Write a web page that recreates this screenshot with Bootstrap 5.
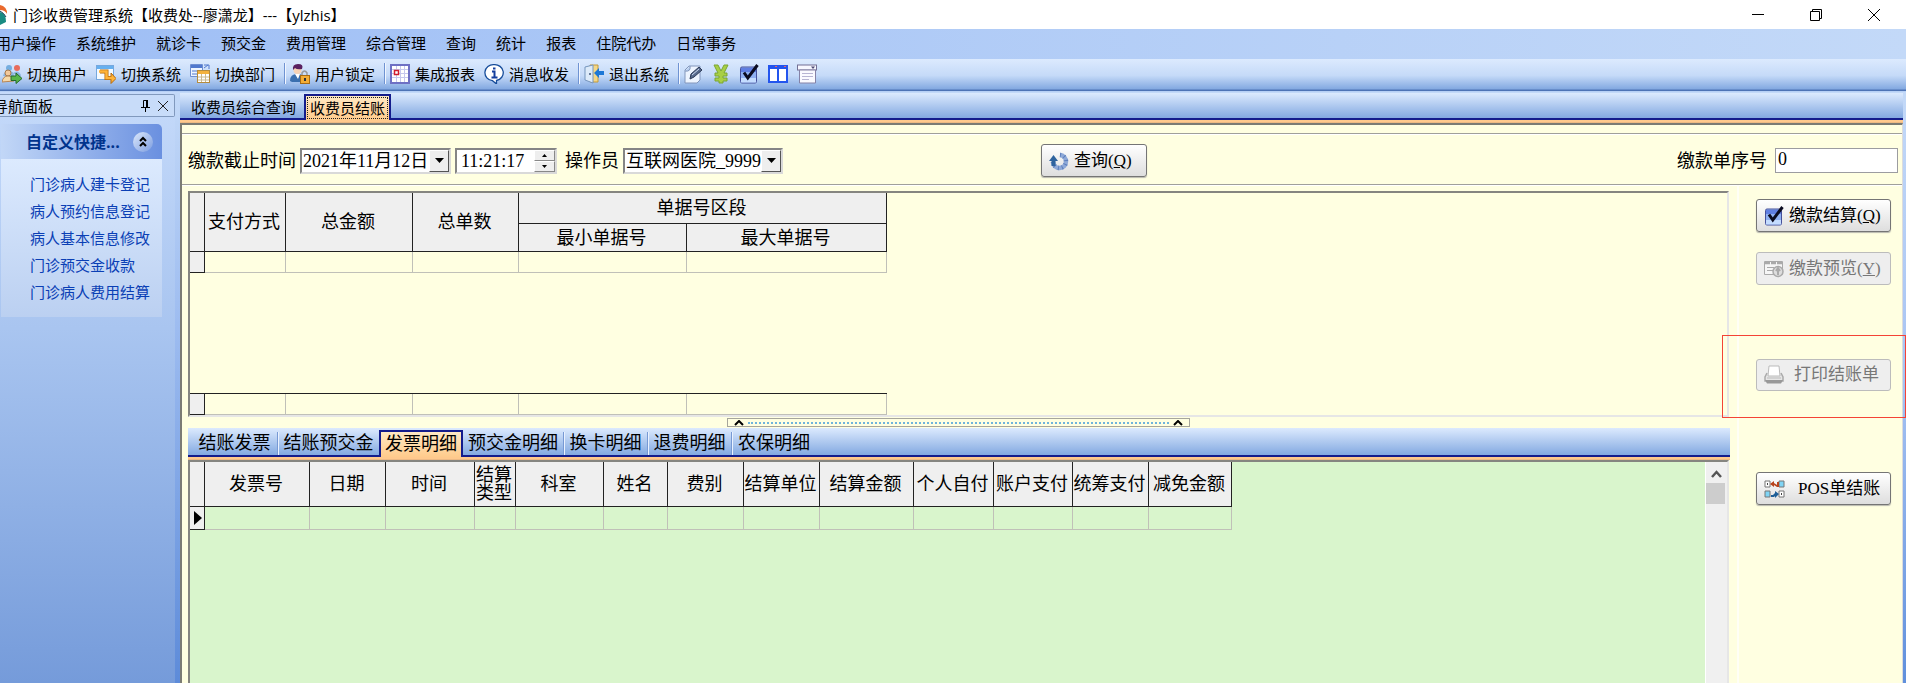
<!DOCTYPE html>
<html lang="zh-CN">
<head>
<meta charset="utf-8">
<meta name="viewport" content="width=device-width, initial-scale=1">
<title>门诊收费管理系统</title>
<link href="https://cdn.jsdelivr.net/npm/bootstrap@5.3.0/dist/css/bootstrap.min.css" rel="stylesheet">
<style>
  body { font: 15px/20px "Open Sans", "Noto Sans CJK SC", sans-serif; color: #000; background: #c3d9f8; }
  svg { display: block; flex: none; }
  a { color: inherit; text-decoration: none; }
  button { color: #000; }
  .titlebar { height: 29px; background: #fff; }
  .titlebar .app-name { margin-left: 2px; }
  .win-btns { gap: 46px; padding-right: 26px; }
  .bare { border: 0; background: none; padding: 0; }
  .menubar { height: 30px; gap: 20px; padding-bottom: 2px; background: linear-gradient(90deg, #9ebef5, #c3d9f8); }
  .menubar a:first-child { margin-left: -4px; }
  .toolbar { height: 33px; padding: 0 0 4px 2px; background: linear-gradient(#dceafe 0, #c5daf8 50%, #83a9e1 30px, #4d73b5 31px, #4d73b5 32px, #b7d0f5 32px); }
  .tool { gap: 5px; margin-right: 9px; }
  .icon-tools { gap: 9px; }
  .rule { width: 2px; height: 21px; background: linear-gradient(90deg, #6f93d2 50%, #f1f6ff 50%); margin-right: 4px; }

  .sidebar { width: 175px; background: linear-gradient(#c5dafa, #a9c5f0 40%, #759bda); }
  .main-area { background: linear-gradient(#c3d9f8, #a5c2f2 50%, #6090dc); padding-right: 3px; }
  .gutter { width: 5px; background: linear-gradient(#c3d9f8, #9dbcf0 40%, #5d8bd9); }
  .dock-head { height: 23px; border: 1px solid #8199bd; border-left: 0; border-radius: 0 2px 2px 0; background: #c8dcf9; padding-right: 6px; margin-top: 2px; }
  .dock-head .dock-title { margin-left: -7px; }
  .nav-group { width: 161px; margin: 7px 0 0 1px; }
  .nav-group-head { height: 35px; padding: 0 9px 0 25px; background: linear-gradient(90deg, #c2d7f7, #6a90e0); border-radius: 0 5px 0 0; color: #00338c; font-weight: 700; font-size: 16px; }
  .chev { width: 20px; height: 20px; border-radius: 50%; background: linear-gradient(135deg, #dce8fb, #7c9de0); }
  .nav-group-body { height: 158px; padding: 12px 0 0 29px; background: linear-gradient(#dceafe, #bbd0f1); color: #0a3fb5; line-height: 27px; }

  .tabstrip { background: linear-gradient(#dceafe, #83a9e1); border-bottom: 2px solid #141c8c; }
  .top-tabs { height: 27px; margin-top: 1px; padding-left: 1px; }
  .top-tabs button { height: 21px; padding: 0 8px 0 10px; line-height: 21px; }
  .top-tabs .active { height: 26px; margin-bottom: -2px; padding: 0; border: 2px solid #141c8c; border-bottom: 0; background: linear-gradient(#ffe9c4, #ffcb8c); }
  .top-tabs .active span { display: block; border: 1px dotted #222; margin: 1px; padding: 0 2px; line-height: 20px; }
  .orange { height: 3px; background: linear-gradient(#ffc98d 60%, #dfae7e); }
  .pane { font: 18px/20px "Liberation Serif", "Noto Sans CJK SC", serif; background: #ffffe1; border: 2px solid #7b7b74; border-right: 1px solid #dcdcdc; border-bottom: 0; }
  .filter { height: 52px; margin-top: 8px; border-top: 1px solid #a0a09a; border-bottom: 1px solid #a0a09a; box-shadow: inset 0 1px #fff, 0 1px #fff; padding: 3px 4px 0 6px; }
  .sunken { height: 26px; background: #fff; border: 2px solid; border-color: #858585 #d9d9d9 #d9d9d9 #858585; }
  .sunken input, .sunken select, .serial { border: 0; background: none; padding: 0 0 0 1px; min-width: 0; width: 100%; appearance: none; color: #000; }
  .date-box { width: 151px; } .time-box { width: 102px; } .op-box { width: 160px; }
  .time-box input { padding-left: 4px; }
  .serial { width: 123px; height: 25px; border: 1px solid #9c9ca0; background: #fff; padding: 0 2px 3px; }
  .drop { width: 20px; flex: none; background: #eee; border: 1px solid; border-color: #fff #555 #555 #fff; padding: 0; }
  .spin { width: 21px; flex: none; }
  .spin button { flex: 1; border: 1px solid; border-color: #fff #888 #888 #fff; background: #eee; padding: 0; }
  .cmd { font-size: 17px; height: 33px; border: 1px solid #757575; border-radius: 3px; background: linear-gradient(#fff, #dedede); box-shadow: 0 1px 1px #b8b8b0; padding: 0 0 0 7px; gap: 5px; color: #000; text-align: left; white-space: nowrap; }
  .cmd:disabled { background: #eee; border: 1px solid #bcbcbc; box-shadow: none; color: #777; opacity: 1; }
  .query { width: 106px; }
  .left-part { flex: 0 0 853px; }

  .workcol { padding: 6px 0 0 6px; }
  .gridbox { border: 2px solid #858580; border-right: 2px solid #e6e6e6; border-bottom: 2px solid #e6e6e6; }
  .pay-grid { min-height: 226px; }
  .pay-grid, .splitter { margin-right: 1px; }
  .dgrid { table-layout: fixed; border-collapse: separate; border-spacing: 0; }
  .dgrid th, .dgrid td { padding: 0; font-weight: 400; text-align: center; overflow: hidden; white-space: nowrap; border-right: 1px solid #c0c0b8; border-bottom: 1px solid #c0c0b8; }
  .dgrid th { background: #efefef; border-color: #222; }
  .dgrid thead th { padding-right: 2px; }
  .pay-table { width: 697px; }
  .pay-table col:nth-child(1), .inv-table col:nth-child(1) { width: 15px; }
  .pay-table col:nth-child(2) { width: 81px; } .pay-table col:nth-child(3) { width: 127px; }
  .pay-table col:nth-child(4) { width: 106px; } .pay-table col:nth-child(5) { width: 168px; }
  .pay-table col:nth-child(6) { width: 200px; }
  .pay-table tr:nth-child(1) th { height: 31px; } .pay-table tr:nth-child(2) th { height: 28px; }
  .pay-table tbody tr td, .pay-table tbody tr:nth-child(1) th { height: 21px; }
  .foot-table { border-top: 1px solid #222; }
  .splitter { height: 11px; padding-top: 1px; }
  .split-grip { width: 463px; height: 9px; border: 1px solid #a6a69c; padding: 0 6px; gap: 4px; }
  .dots { border-top: 2px dotted #6fb4dc; }
  .inner-tabs { height: 29px; }
  .inner-tabs button { height: 23px; line-height: 23px; padding: 0; border-right: 1px solid #7799d4; box-shadow: 1px 0 #eaf2ff; white-space: nowrap; }
  .inner-tabs .four { width: 84px; } .inner-tabs .five { width: 101px; }
  .inner-tabs .first { width: 86px; }
  .inner-tabs .no-rule { border-right: 0; box-shadow: none; }
  .inner-tabs .active { height: 27px; margin-bottom: -2px; border: 2px solid #141c8c; border-bottom: 0; box-shadow: none; background: linear-gradient(#ffe9c4, #ffcb8c); }
  .inv-grid { background: #d9f5cc; border-bottom: 0; margin-right: 1px; }
  .inv-table { width: 1042px; }
  .inv-table col:nth-child(2) { width: 105px; } .inv-table col:nth-child(3) { width: 76px; }
  .inv-table col:nth-child(4) { width: 89px; } .inv-table col:nth-child(5) { width: 41px; }
  .inv-table col:nth-child(6) { width: 88px; } .inv-table col:nth-child(7) { width: 64px; }
  .inv-table col:nth-child(8) { width: 76px; } .inv-table col:nth-child(9) { width: 76px; }
  .inv-table col:nth-child(10) { width: 94px; } .inv-table col:nth-child(11) { width: 80px; }
  .inv-table col:nth-child(12) { width: 79px; } .inv-table col:nth-child(13) { width: 76px; }
  .inv-table col:nth-child(14) { width: 83px; }
  .inv-table thead th { height: 45px; line-height: 18px; } .inv-table tbody th { height: 23px; }
  .vscroll { width: 22px; border-left: 1px solid #fff; background: #f0f0f0; padding-top: 6px; }
  .thumb { height: 21px; width: 19px; background: #cdcdcd; margin-top: 3px; }
  .actions { width: 165px; padding: 14px 11px 0 17px; margin-left: 7px; border-left: 2px solid #fffff6; }
  .actions .cmd { width: 100%; }
  .preview { margin-top: 20px; } .print { margin-top: 74px; } .actions .pos { margin-top: 81px; gap: 13px; }
  .print .cmd { height: 32px; gap: 10px; }
  .highlight { inset: -24px -15px -27px -34px; border: 1px solid #f44336; pointer-events: none; }
</style>
</head>
<body class="vh-100 overflow-hidden d-flex flex-column">
<svg class="d-none">
  <symbol id="i-check" viewBox="0 0 20 20"><rect x="1.500" y="3" width="16" height="16" rx="1.500" fill="#8fb0f2" stroke="#46509a"/><path d="M2 4h15v4H2z" fill="#5f7ee2"/><path d="M2 14h15v4.500H2z" fill="#c4dcff"/><path d="M5 8.500 8.800 14 18.500 1" fill="none" stroke="#0b0b20" stroke-width="3"/></symbol>
</svg>

<header>
  <div class="titlebar d-flex align-items-center">
    <svg width="11" height="20" viewBox="0 0 11 20"><path d="M0 0a8 8 0 0 1 7 9Q5 5 0 5z" fill="#ea6a2d"/><path d="M0 7q6 1 6 10l-6 3z" fill="#198b82"/><path d="M0 6q4 2 6 6" stroke="#173d55" fill="none"/></svg>
    <span class="app-name">门诊收费管理系统【收费处--廖潇龙】---【ylzhis】</span>
    <div class="win-btns d-flex ms-auto">
      <button class="bare" aria-label="最小化"><svg width="12" height="12"><path d="M0 5.500h12" stroke="#000"/></svg></button>
      <button class="bare" aria-label="还原"><svg width="12" height="12" fill="none" stroke="#000"><path d="M.5 2.500h9v9h-9zM2.500 2V.5h9v9H10"/></svg></button>
      <button class="bare" aria-label="关闭"><svg width="12" height="12"><path d="m0 0 12 12M12 0 0 12" stroke="#000"/></svg></button>
    </div>
  </div>
  <nav class="menubar d-flex align-items-center text-nowrap" aria-label="主菜单">
    <a href="#">用户操作</a><a href="#">系统维护</a><a href="#">就诊卡</a><a href="#">预交金</a><a href="#">费用管理</a><a href="#">综合管理</a><a href="#">查询</a><a href="#">统计</a><a href="#">报表</a><a href="#">住院代办</a><a href="#">日常事务</a>
  </nav>
  <div class="toolbar d-flex align-items-center text-nowrap" role="toolbar">
    <button class="bare tool d-flex align-items-center"><svg width="20" height="20" viewBox="0 0 20 20"><circle cx="7" cy="4" r="3" fill="#75aee0"/><circle cx="15" cy="4" r="3" fill="#e86c5c"/><path d="M1 12q1-5 6-5t5 5M11 9q5-4 8 2l-1 3" fill="#8cb5df"/><circle cx="6" cy="9" r="3" fill="#f3c99c" stroke="#a97b4c"/><path d="M0 18q1-6 6-6t6 5z" fill="#f7d9a8" stroke="#b88654"/><path d="M9 12h5V9l6 5.500-6 5v-3H9z" fill="#58b548" stroke="#246a2a"/></svg>切换用户</button>
    <button class="bare tool d-flex align-items-center"><svg width="20" height="20" viewBox="0 0 20 20"><rect x=".5" y="1.500" width="17" height="14" fill="#f5faff" stroke="#76a8de"/><path d="M1 2h16v3H1z" fill="#67b0ef"/><path d="M4 7.500h6.500V14H16" fill="none" stroke="#b4690d" stroke-width="4"/><path d="m15 9 5 5.500-5 5z" fill="#ffb43a" stroke="#b4690d"/><path d="M3 7.500h7.500V14H16" fill="none" stroke="#ffb43a" stroke-width="2.500"/></svg>切换系统</button>
    <button class="bare tool d-flex align-items-center"><svg width="20" height="20" viewBox="0 0 20 20"><path d="M.5.500h12v12H.5z" fill="#eef5ff" stroke="#6e8ed2"/><path d="M1 1h11v3H1z" fill="#5078ce"/><path d="M2 7h5M2 10h5M14 1h5v4M14 4l4-3" stroke="#5078ce" fill="none"/><rect x="7.500" y="6.500" width="12" height="12" fill="#fff" stroke="#b58c3e"/><path d="M8 7h11v3H8z" fill="#f4b23e"/><path d="M8 13h11M8 16h11M11.500 10v8M15.500 10v8" stroke="#c9b98f"/></svg>切换部门</button>
    <i class="rule"></i>
    <button class="bare tool d-flex align-items-center"><svg width="20" height="20" viewBox="0 0 20 20"><path d="M0 17q0-7 7-7t8 5v3H2z" fill="#3a6faf"/><path d="M5 10h5l-2 5z" fill="#fff"/><circle cx="7.500" cy="6" r="4" fill="#f6d2b5"/><path d="M3 6q-1-6 5-6t4 5q-5 1-7-1z" fill="#5a2160"/><path d="M12 12V9q2.500-4 5 0v3" fill="none" stroke="#999" stroke-width="1.500"/><rect x="10.500" y="11.500" width="9" height="8" fill="#f3ad35" stroke="#a86b12"/><path d="M15 14v3" stroke="#333" stroke-width="2"/></svg>用户锁定</button>
    <i class="rule"></i>
    <button class="bare tool d-flex align-items-center"><svg width="20" height="20" viewBox="0 0 20 20"><rect x="1" y="1" width="18" height="18" fill="#fff" stroke="#6e70c4" stroke-width="2"/><path d="M2 5.500h16M2 9.500h16M2 13.500h16M6.500 2v16M10.500 2v16M14.500 2v16" stroke="#c6c8ed"/><rect x="4.500" y="6.500" width="4" height="4" fill="#fff" stroke="#d11c2d" stroke-width="1.500"/></svg>集成报表</button>
    <button class="bare tool d-flex align-items-center"><svg width="20" height="20" viewBox="0 0 20 20"><path d="M10 .700a8.500 8 0 0 1 2.500 15.800V20L8.500 16.700A8.300 8 0 0 1 10 .700z" fill="#fff" stroke="#164c9a" stroke-width="1.300"/><path d="M8 7.500h2.500V13M7.500 13.500h6M9 4.500h2.500" fill="none" stroke="#153f9e" stroke-width="2"/></svg>消息收发</button>
    <i class="rule"></i>
    <button class="bare tool d-flex align-items-center"><svg width="20" height="20" viewBox="0 0 20 20"><path d="M6 1h8v17H6z" fill="#f4d786" stroke="#c29a3c"/><path d="m1 3 8-2v18l-8-3z" fill="#dceaf9" stroke="#7595bd"/><circle cx="6" cy="10" r="1" fill="#3e5378"/><path d="m10 9 5-5v3h5v4h-5v3z" fill="#1c77d6"/></svg>退出系统</button>
    <i class="rule"></i>
    <div class="icon-tools d-flex align-items-center">
      <button class="bare" aria-label="编辑"><svg width="19" height="20" viewBox="0 0 19 20"><path d="M5 2h11v14l-3 3H1V6z" fill="#edf4ff" stroke="#8296bb"/><path d="M1 7q6 1 5-5" fill="#b6cef0" stroke="#8296bb"/><path d="m6 15 1-5 8-7 3 3-8 7z" fill="#56698c" stroke="#2d3b58"/><path d="m8 11 7-6" stroke="#cfdcf2"/></svg></button>
      <button class="bare" aria-label="收费"><svg width="18" height="20" viewBox="0 0 18 20"><path d="M2 1h4l3 6 3-6h4l-4 8h3v3h-4v2h4v3h-4v2H7v-2H3v-3h4v-2H3V9h3z" fill="#a8cf45" stroke="#7ba632"/></svg></button>
      <button class="bare" aria-label="确认"><svg width="20" height="20"><use href="#i-check"/></svg></button>
      <button class="bare" aria-label="分栏"><svg width="20" height="20" viewBox="0 0 20 20"><path d="M1 2h18v16H1z" fill="#fff" stroke="#2355ee" stroke-width="2"/><path d="M0 1h20v4H0zM9 2h2v16H9z" fill="#2355ee"/><path d="M7 2h2v1H7zM16 2h2v1h-2z" fill="#f06060"/></svg></button>
      <button class="bare" aria-label="窗口"><svg width="20" height="20" viewBox="0 0 20 20"><rect x=".5" y="1" width="19" height="5" fill="#f7f7ff" stroke="#726f94"/><path d="M2.500 6h16v13h-16z" fill="#fafaff" stroke="#8582a6"/><path d="M5 9.500h11M5 12.500h11M5 15.500h7" stroke="#b8b5d3"/><path d="M14 2.500h4L16 5z" fill="#4c4872"/></svg></button>
    </div>
  </div>
</header>

<div class="d-flex flex-fill">
  <aside class="sidebar flex-shrink-0">
    <div class="dock-head d-flex align-items-center overflow-hidden">
      <span class="dock-title">导航面板</span>
      <button class="bare ms-auto" aria-label="固定"><svg width="9" height="13"><path d="M2.500 8V1.500h4V8M0 8.500h9M4.500 9v4" fill="none" stroke="#000"/><path d="M5 1h2v7H5z"/></svg></button>
      <button class="bare ms-2" aria-label="关闭面板"><svg width="10" height="10"><path d="m0 0 10 10M10 0 0 10" stroke="#222"/></svg></button>
    </div>
    <section class="nav-group">
      <div class="nav-group-head d-flex align-items-center justify-content-between"><span>自定义快捷...</span><button class="bare chev d-flex justify-content-center align-items-center" aria-label="折叠"><svg width="8" height="11" fill="none" stroke="#000" stroke-width="2"><path d="m1 5 3-3 3 3M1 10l3-3 3 3"/></svg></button></div>
      <div class="nav-group-body d-flex flex-column">
        <a href="#">门诊病人建卡登记</a><a href="#">病人预约信息登记</a><a href="#">病人基本信息修改</a><a href="#">门诊预交金收款</a><a href="#">门诊病人费用结算</a>
      </div>
    </section>
  </aside>
  <div class="gutter flex-shrink-0"></div>

  <main class="main-area flex-fill d-flex flex-column">
    <div class="tabstrip top-tabs d-flex align-items-end" role="tablist">
      <button class="bare" role="tab">收费员综合查询</button><button class="bare active" role="tab" aria-selected="true"><span>收费员结账</span></button>
    </div>
    <div class="orange"></div>
    <div class="pane flex-fill d-flex flex-column">
      <form class="filter d-flex align-items-center text-nowrap">
        <div class="left-part d-flex align-items-center">
          <label for="d">缴款截止时间</label>
          <div class="sunken date-box d-flex ms-1"><input id="d" value="2021年11月12日"><button type="button" class="drop d-flex align-items-center justify-content-center" aria-label="选择日期"><svg width="9" height="5"><path d="M0 0h9L4.500 5z"/></svg></button></div>
          <div class="sunken time-box d-flex ms-1"><input aria-label="时间" value="11:21:17"><div class="spin d-flex flex-column"><button type="button" class="d-flex align-items-center justify-content-center" aria-label="增加"><svg width="5" height="3"><path d="M0 3h5L2.500 0z"/></svg></button><button type="button" class="d-flex align-items-center justify-content-center" aria-label="减少"><svg width="5" height="3"><path d="M0 0h5L2.500 3z"/></svg></button></div></div>
          <label for="op" class="ms-2">操作员</label>
          <div class="sunken op-box d-flex ms-1"><select id="op"><option>互联网医院_9999</option></select><span class="drop d-flex align-items-center justify-content-center"><svg width="9" height="5"><path d="M0 0h9L4.500 5z"/></svg></span></div>
        </div>
        <button type="button" class="cmd query d-flex align-items-center flex-shrink-0"><svg width="20" height="20" viewBox="0 0 20 20" fill="none"><path d="M11 4a6.500 6.500 0 1 1-7 7" stroke="#8ea9d8" stroke-width="4.500"/><path d="M11 4a6.500 6.500 0 1 1-7 7" stroke="#5f80bd" stroke-width="4.500" stroke-dasharray="1 3"/><path d="M4.500 15V8" stroke="#2e639e" stroke-width="4"/><path d="m0 10 4.500-6L9 10z" fill="#2e639e"/></svg><span>查询(<u>Q</u>)</span></button>
        <div class="d-flex align-items-center ms-auto"><label for="sn" class="me-2">缴款单序号</label><input id="sn" class="serial" value="0"></div>
      </form>

      <div class="d-flex flex-fill">
        <div class="workcol flex-fill d-flex flex-column">
          <div class="gridbox pay-grid d-flex flex-column">
            <table class="dgrid pay-table">
              <colgroup><col><col><col><col><col><col></colgroup>
              <thead><tr><th rowspan="2"></th><th rowspan="2">支付方式</th><th rowspan="2">总金额</th><th rowspan="2">总单数</th><th colspan="2">单据号区段</th></tr><tr><th>最小单据号</th><th>最大单据号</th></tr></thead>
              <tbody><tr><th></th><td></td><td></td><td></td><td></td><td></td></tr></tbody>
            </table>
            <table class="dgrid pay-table foot-table mt-auto" aria-label="合计">
              <colgroup><col><col><col><col><col><col></colgroup>
              <tbody><tr><th></th><td></td><td></td><td></td><td></td><td></td></tr></tbody>
            </table>
          </div>
          <div class="splitter d-flex justify-content-center">
            <div class="split-grip d-flex align-items-center"><svg width="10" height="6"><path d="m1 5 4-4 4 4" fill="none" stroke="#000" stroke-width="2"/></svg><span class="dots flex-fill"></span><svg width="10" height="6"><path d="m1 5 4-4 4 4" fill="none" stroke="#000" stroke-width="2"/></svg></div>
          </div>
          <div class="tabstrip inner-tabs d-flex align-items-end" role="tablist">
            <button class="bare first ms-1" role="tab">结账发票</button><button class="bare five no-rule" role="tab">结账预交金</button><button class="bare four active" role="tab" aria-selected="true">发票明细</button><button class="bare five" role="tab">预交金明细</button><button class="bare four" role="tab">换卡明细</button><button class="bare four" role="tab">退费明细</button><button class="bare four no-rule" role="tab">农保明细</button>
          </div>
          <div class="orange"></div>
          <div class="gridbox inv-grid flex-fill d-flex">
            <div class="flex-fill">
              <table class="dgrid inv-table">
                <colgroup><col><col><col><col><col><col><col><col><col><col><col><col><col><col></colgroup>
                <thead><tr><th></th><th>发票号</th><th>日期</th><th>时间</th><th>结算<br>类型</th><th>科室</th><th>姓名</th><th>费别</th><th>结算单位</th><th>结算金额</th><th>个人自付</th><th>账户支付</th><th>统筹支付</th><th>减免金额</th></tr></thead>
                <tbody><tr><th><svg class="ms-1" width="8" height="14"><path d="M0 0v14l8-7z"/></svg></th><td></td><td></td><td></td><td></td><td></td><td></td><td></td><td></td><td></td><td></td><td></td><td></td><td></td></tr></tbody>
              </table>
            </div>
            <div class="vscroll d-flex flex-column flex-shrink-0"><svg class="mx-auto" width="11" height="12"><path d="m1 9 4.500-5L10 9" fill="none" stroke="#555" stroke-width="2.500"/></svg><div class="thumb"></div></div>
          </div>
        </div>
        <div class="actions flex-shrink-0">
          <button class="cmd d-flex align-items-center"><svg width="20" height="20"><use href="#i-check"/></svg><span>缴款结算(<u>Q</u>)</span></button>
          <button class="cmd preview d-flex align-items-center" disabled><svg width="20" height="18" viewBox="0 0 20 18" fill="none" stroke="#aaa"><path d="M.5 1.500h18v13H.5z" fill="#f6f6f6"/><path d="M1 3h18" stroke-width="2.500" stroke-dasharray="5 1"/><path d="M3 7.500h7M3 10.500h6"/><circle cx="14" cy="11.500" r="5" fill="#ddd" stroke-width="1.500"/><path d="M14 8v7M12 11l2-3 2 3" stroke-width="2"/></svg><span>缴款预览(<u>Y</u>)</span></button>
          <div class="print position-relative">
            <button class="cmd d-flex align-items-center" disabled><svg width="20" height="20" viewBox="0 0 20 20"><path d="m3 8-2 4v4h18v-4l-2-4" fill="#e6e6e6" stroke="#aaa" stroke-width="1.500"/><path d="M5 1h10l1 10H4z" fill="#fff" stroke="#bbb"/><path d="M3 13h14" stroke="#bbb"/><path d="M1 15h18l-2 3.500H3z" fill="#999"/></svg><span>打印结账单</span></button>
            <div class="highlight position-absolute"></div>
          </div>
          <button class="cmd pos d-flex align-items-center"><svg width="21" height="20" viewBox="0 0 21 20"><g fill="#fff" stroke="#777"><path d="M1 2h5v6H1zM15 12h5v6h-5z"/><path d="M15 2h5v6h-5zM1 12h5v6H1z" fill="#7fd4f5"/></g><path d="m6 5 4-3v2l3 2V3h2v5h-2l-3-2v2z" fill="#b8441d"/><path d="m15 15-4-3v2l-2 2H7v2h3l1-1v2z" fill="#1e5f98"/><path d="M3 4h1v2H3zM17 14h1v2h-1z" fill="#444"/></svg><span>POS单结账</span></button>
        </div>
      </div>
    </div>
  </main>
</div>
<script src="https://cdn.jsdelivr.net/npm/bootstrap@5.3.0/dist/js/bootstrap.bundle.min.js"></script>
</body>
</html>
